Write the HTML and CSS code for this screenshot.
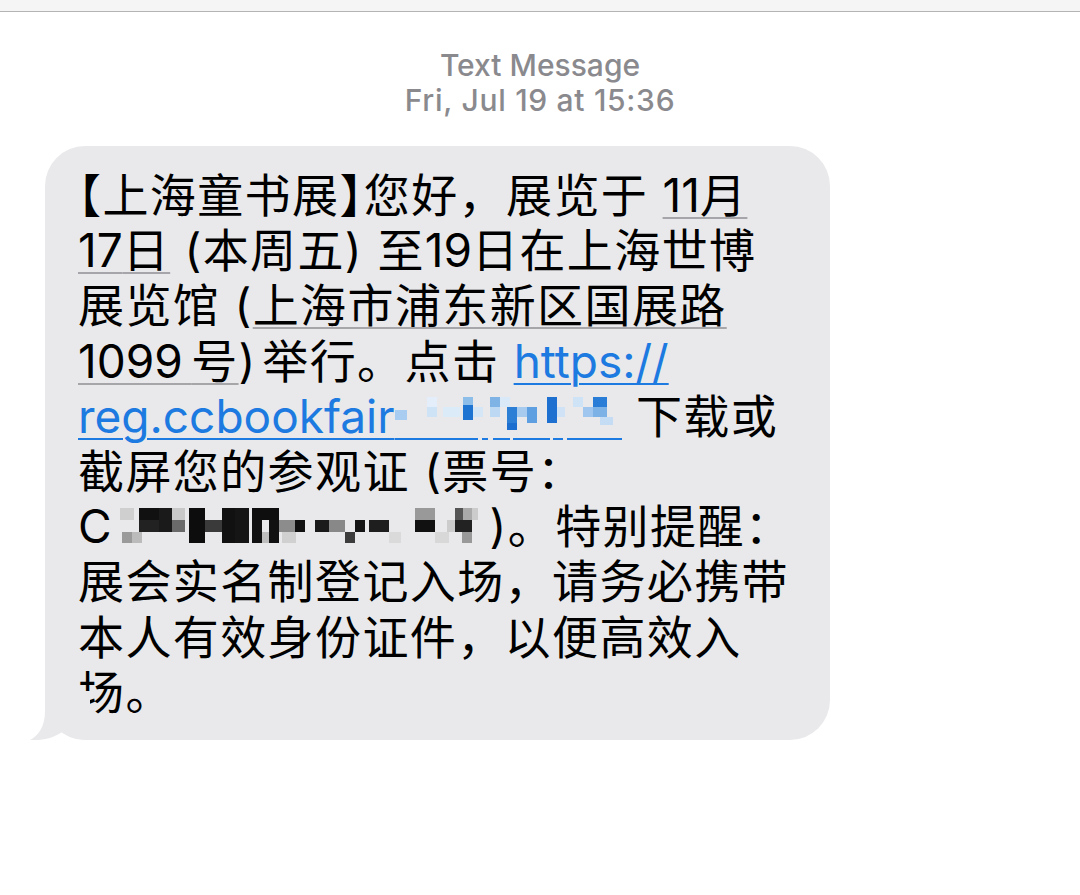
FILE: index.html
```html
<!DOCTYPE html>
<html lang="zh-CN">
<head>
<meta charset="utf-8">
<title>Text Message</title>
<link rel="stylesheet" href="styles.css">
</head>
<body>
<div class="topbar"></div>
<header class="meta">
  <div class="meta-title">Text Message</div>
  <div class="meta-date">Fri, Jul 19 at 15:36</div>
</header>
<main class="thread">
  <div class="bubble">
    <p class="msg">
      <span class="line"><span class="halt">【</span>上海童书展<span class="halt">】</span>您好，展览于 <span class="dd"><span class="lat">11</span>月</span></span>
      <span class="line"><span class="dd"><span class="lat">17</span>日</span> (本周五) 至<span class="lat">19</span>日在上海世博</span>
      <span class="line">展览馆 (<span class="dd">上海市浦东新区国展路</span></span>
      <span class="line"><span class="dd"><span class="lat">1099&thinsp;</span>号</span>)&#8202;举行。点击 <span class="link">https://</span></span>
      <span class="line"><span class="link">reg.ccbookfair</span><svg class="mosaic mosaic-link" width="227" height="46" viewBox="0 0 227 46" aria-hidden="true">
        <rect x="0" y="15" width="12" height="10" fill="#a9cdf0"/>
        <rect x="32" y="2" width="10" height="10" fill="#e3eefa"/>
        <rect x="32" y="12" width="10" height="10" fill="#cfe3f6"/>
        <rect x="48" y="12" width="17" height="10" fill="#dcebf8"/>
        <rect x="68" y="2" width="10" height="8" fill="#8dbde9"/>
        <rect x="68" y="10" width="10" height="15" fill="#1f74d2"/>
        <rect x="78" y="12" width="10" height="10" fill="#d5e6f7"/>
        <rect x="95" y="2" width="10" height="10" fill="#7fb3e6"/>
        <rect x="95" y="12" width="10" height="10" fill="#bcd8f2"/>
        <rect x="105" y="2" width="10" height="10" fill="#d9e9f8"/>
        <rect x="112" y="12" width="10" height="16" fill="#2d7fd6"/>
        <rect x="112" y="28" width="10" height="7" fill="#1c6fcf"/>
        <rect x="122" y="12" width="10" height="10" fill="#a7cbee"/>
        <rect x="132" y="12" width="10" height="16" fill="#5e9fe1"/>
        <rect x="152" y="2" width="10" height="26" fill="#1d70d0"/>
        <rect x="162" y="12" width="8" height="10" fill="#cfe2f6"/>
        <rect x="178" y="2" width="10" height="10" fill="#cfe3f6"/>
        <rect x="188" y="12" width="10" height="10" fill="#9fc6ee"/>
        <rect x="198" y="2" width="14" height="10" fill="#2a7dd6"/>
        <rect x="198" y="12" width="14" height="10" fill="#7cb2e6"/>
        <rect x="205" y="22" width="13" height="8" fill="#c4ddf4"/>
        <rect x="0" y="43" width="83" height="2" fill="#1c7ae0"/>
        <rect x="87" y="43" width="6" height="2" fill="#1c7ae0"/>
        <rect x="98" y="43" width="17" height="2" fill="#1c7ae0"/>
        <rect x="118" y="43" width="37" height="2" fill="#1c7ae0"/>
        <rect x="158" y="43" width="10" height="2" fill="#1c7ae0"/>
        <rect x="172" y="43" width="55" height="2" fill="#1c7ae0"/>
      </svg> 下载或</span>
      <span class="line">截屏您的参观证 (票号：</span>
      <span class="line"><span class="lat">C</span><svg class="mosaic mosaic-ticket" width="378" height="46" viewBox="0 0 378 46" aria-hidden="true">
        <rect x="8" y="5" width="14" height="12" fill="#cfcfcf"/>
        <rect x="10" y="29" width="12" height="11" fill="#9a9a9a"/>
        <rect x="27" y="5" width="20" height="12" fill="#111"/>
        <rect x="27" y="17" width="20" height="12" fill="#222"/>
        <rect x="20" y="29" width="10" height="11" fill="#bbb"/>
        <rect x="47" y="5" width="13" height="24" fill="#1a1a1a"/>
        <rect x="60" y="5" width="13" height="12" fill="#c8c8c8"/>
        <rect x="60" y="17" width="13" height="12" fill="#6a6a6a"/>
        <rect x="77" y="5" width="16" height="35" fill="#0d0d0d"/>
        <rect x="93" y="17" width="17" height="12" fill="#3a3a3a"/>
        <rect x="110" y="5" width="13" height="35" fill="#111"/>
        <rect x="123" y="5" width="14" height="35" fill="#151515"/>
        <rect x="140" y="5" width="27" height="12" fill="#0e0e0e"/>
        <rect x="140" y="17" width="10" height="23" fill="#111"/>
        <rect x="157" y="17" width="10" height="23" fill="#111"/>
        <rect x="150" y="29" width="7" height="11" fill="#bdbdbd"/>
        <rect x="167" y="17" width="16" height="12" fill="#8c8c8c"/>
        <rect x="183" y="17" width="10" height="12" fill="#111"/>
        <rect x="170" y="29" width="14" height="11" fill="#d0d0d0"/>
        <rect x="203" y="17" width="14" height="12" fill="#1a1a1a"/>
        <rect x="217" y="17" width="16" height="12" fill="#888"/>
        <rect x="233" y="29" width="10" height="11" fill="#3c3c3c"/>
        <rect x="243" y="17" width="10" height="12" fill="#151515"/>
        <rect x="257" y="17" width="20" height="12" fill="#1e1e1e"/>
        <rect x="277" y="29" width="12" height="11" fill="#dadada"/>
        <rect x="303" y="5" width="20" height="12" fill="#999"/>
        <rect x="303" y="17" width="20" height="12" fill="#111"/>
        <rect x="323" y="29" width="14" height="11" fill="#d8d8d8"/>
        <rect x="335" y="17" width="8" height="12" fill="#ccc"/>
        <rect x="343" y="5" width="8" height="12" fill="#555"/>
        <rect x="351" y="5" width="9" height="12" fill="#aaa"/>
        <rect x="343" y="17" width="17" height="12" fill="#222"/>
        <rect x="350" y="29" width="10" height="11" fill="#999"/>
        <rect x="360" y="5" width="6" height="12" fill="#ccc"/>
      </svg>)。特别提醒：</span>
      <span class="line">展会实名制登记入场，请务必携带</span>
      <span class="line">本人有效身份证件，以便高效入</span>
      <span class="line">场。</span>
    </p>
    <svg class="tail" width="60" height="49" viewBox="0 0 60 49" aria-hidden="true">
      <path d="M15,0 L15,20 C15,36 8,45 0,49 C14,50 25,46 32,41 C40,47 50,49 60,49 L60,0 Z" fill="#e9e9eb"/>
    </svg>
  </div>
</main>
</body>
</html>
```

FILE: styles.css
```css
html, body {
  margin: 0;
  padding: 0;
  background: #ffffff;
}

body {
  font-family: Inter, "Noto Sans CJK SC", sans-serif;
}

.topbar {
  height: 11px;
  background: #f5f5f5;
  border-bottom: 1px solid #b4b4b4;
}

.meta {
  padding-top: 36px;
  text-align: center;
  color: #8a8a8e;
  font-size: 30px;
  line-height: 35px;
  font-weight: 500;
}

.meta-date {
  letter-spacing: 0.7px;
}

.thread {
  padding: 28px 0 0 45px;
}

.bubble {
  position: relative;
  width: 752px;
  padding: 22px 0 20px 33px;
  background: #e9e9eb;
  border-radius: 40px;
}

.msg {
  margin: 0;
  font-size: 46px;
  line-height: 55.2px;
  letter-spacing: 1.4px;
  color: #000000;
}

.line {
  display: block;
  white-space: nowrap;
}

.lat,
.link {
  letter-spacing: 0;
}

.halt {
  font-feature-settings: "halt";
}

.dd {
  text-decoration: underline;
  text-decoration-color: #a6a6aa;
  text-decoration-thickness: 2px;
  text-underline-offset: 5px;
}

.link {
  color: #1c7ae0;
  text-decoration: underline;
  text-decoration-color: #1c7ae0;
  text-decoration-thickness: 2px;
  text-underline-offset: 5px;
}

.mosaic {
  display: inline-block;
}

.mosaic-link {
  vertical-align: -8px;
}

.mosaic-ticket {
  vertical-align: -6px;
}

.tail {
  position: absolute;
  left: -15px;
  bottom: 0;
}
```
